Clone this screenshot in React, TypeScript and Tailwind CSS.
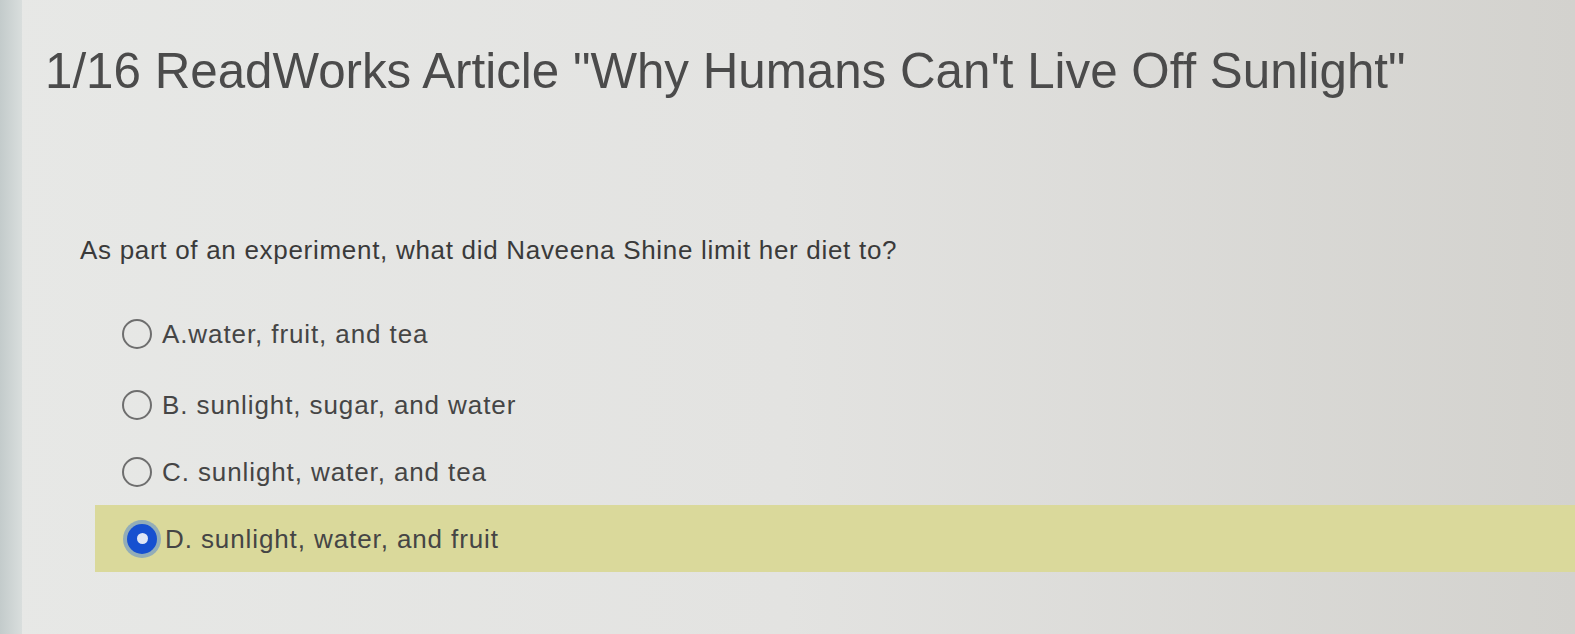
import React from "react";

interface Option {
  id: string;
  label: string;
}

const options: Option[] = [
  { id: "a", label: "A.water, fruit, and tea" },
  { id: "b", label: "B. sunlight, sugar, and water" },
  { id: "c", label: "C. sunlight, water, and tea" },
  { id: "d", label: "D. sunlight, water, and fruit" },
];

const Radio = ({ checked }: { checked: boolean }) =>
  checked ? (
    <span className="flex h-[38px] w-[38px] items-center justify-center rounded-full bg-[#3a78dc]/45">
      <span className="flex h-[30px] w-[30px] items-center justify-center rounded-full bg-[#1650d0]">
        <span className="h-[11px] w-[11px] rounded-full bg-[#dfe6f5]" />
      </span>
    </span>
  ) : (
    <span className="h-[30px] w-[30px] rounded-full border-2 border-[#6e6e6e]" />
  );

export default function App() {
  const selected = "d";

  return (
    <div
      className="flex h-[634px] w-[1575px] overflow-hidden bg-gradient-to-r from-[#e7e8e6] via-[#e3e3e1] to-[#d3d2ce] text-[#4a4a4a]"
      style={{ fontFamily: '"Liberation Sans", Arial, sans-serif' }}
    >
      <div className="w-[22px] shrink-0 bg-gradient-to-r from-[#c3cbcb] to-[#d9dedd]" />
      <div className="flex flex-1 flex-col">
        <h1 className="ml-[23px] mt-[46px] text-[49.3px] font-normal leading-none text-[#4b4b4b]">
          1/16 ReadWorks Article "Why Humans Can't Live Off Sunlight"
        </h1>
        <p className="ml-[58px] mt-[142px] text-[26px] leading-none tracking-[0.7px] text-[#3a3a3a]">
          As part of an experiment, what did Naveena Shine limit her diet to?
        </p>
        <div className="mt-[37px] flex flex-col">
          {options.map((o, i) => {
            const isSel = o.id === selected;
            return (
              <div
                key={o.id}
                className={`flex h-[67px] items-center ${
                  isSel ? "ml-[73px] bg-[#dad99b] pl-[28px]" : "pl-[100px]"
                } ${i === 1 ? "mt-[4px]" : ""}`}
              >
                <Radio checked={isSel} />
                <span
                  className={`${isSel ? "ml-[4px]" : "ml-[10px]"} text-[26px] leading-none tracking-[0.9px] text-[#454545]`}
                >
                  {o.label}
                </span>
              </div>
            );
          })}
        </div>
      </div>
    </div>
  );
}
